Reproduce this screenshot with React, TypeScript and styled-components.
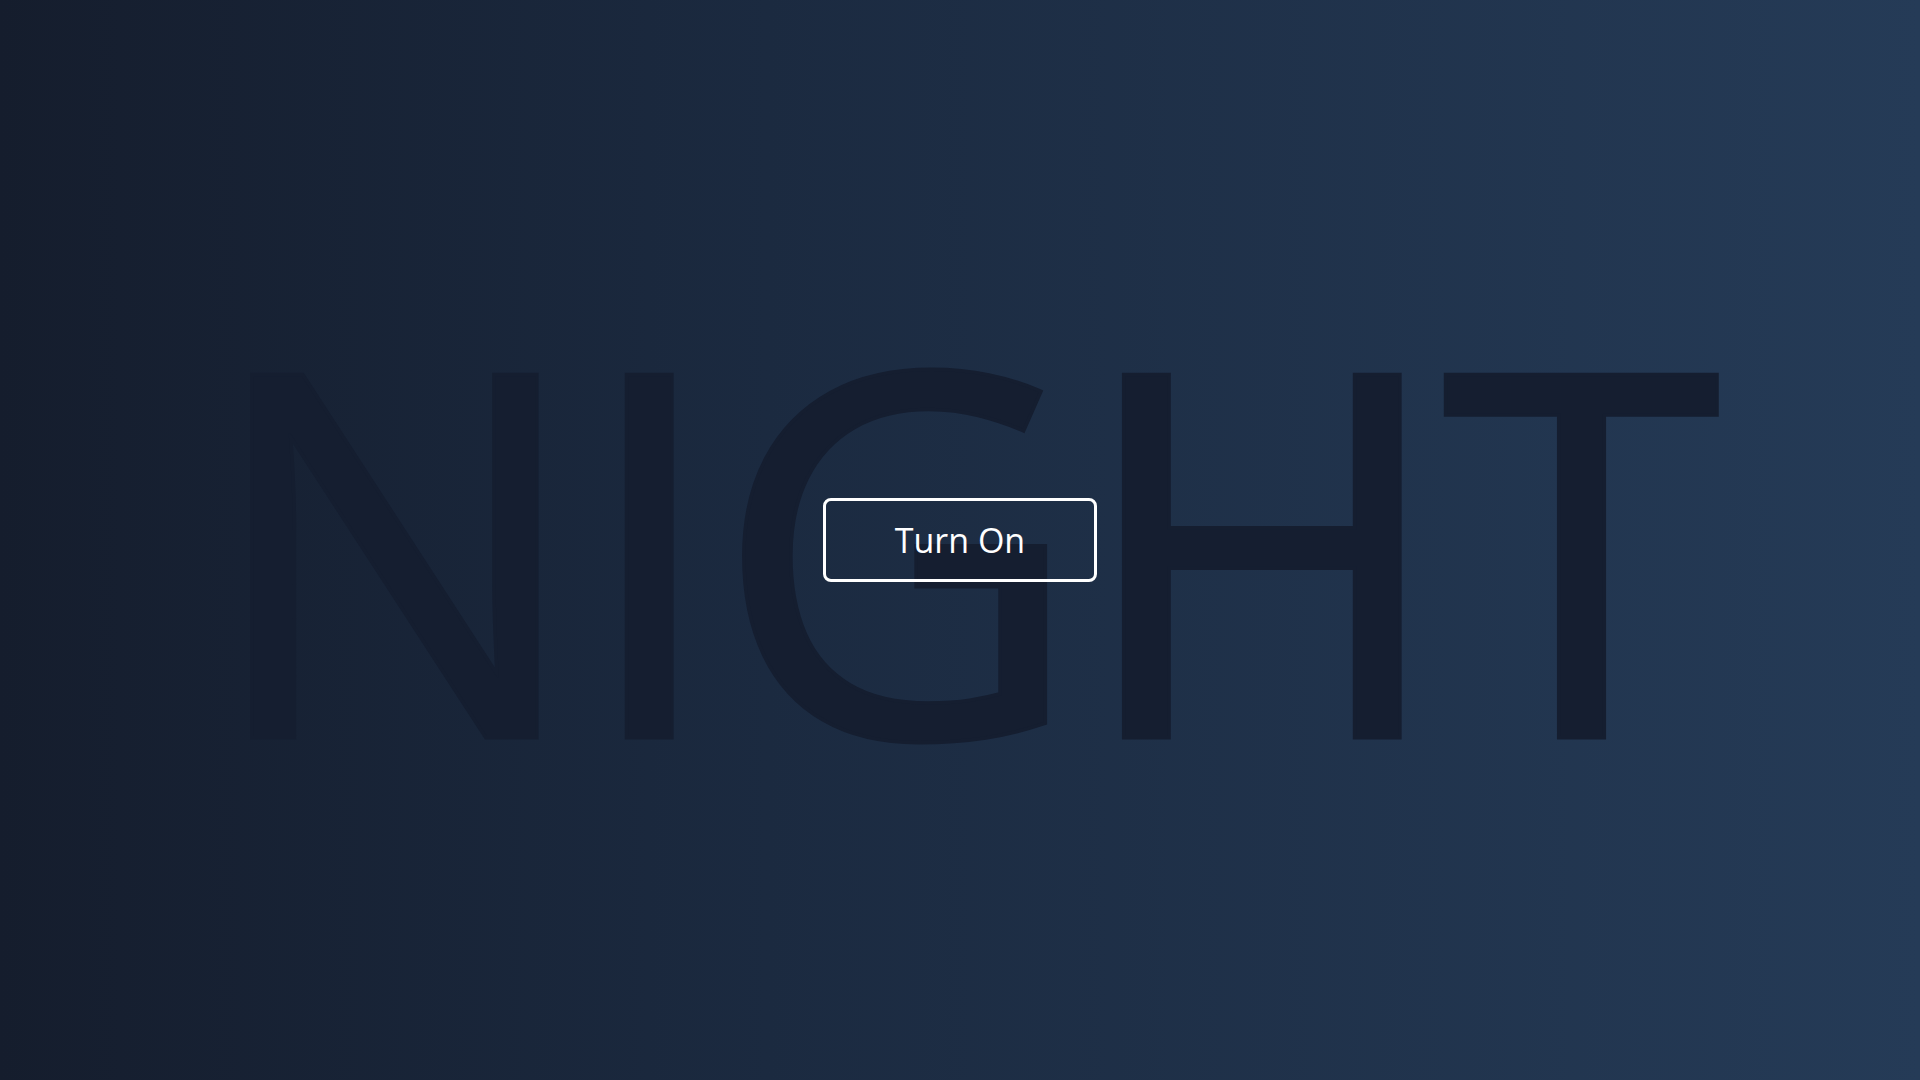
import React from "react";
import styled, { createGlobalStyle } from "styled-components";

const Global = createGlobalStyle`
  html, body, #root { margin: 0; padding: 0; height: 100%; }
  body { font-family: "Open Sans", sans-serif; }
`;

const Stage = styled.main`
  position: relative;
  width: 100vw;
  height: 100vh;
  overflow: hidden;
  display: grid;
  place-items: center;
  background: linear-gradient(to right, #151d2d 0%, #1b2a40 40%, #253b57 100%);
`;

const Word = styled.div`
  grid-area: 1 / 1;
  font-family: "Open Sans", sans-serif;
  font-size: 504px;
  line-height: normal;
  letter-spacing: -5px;
  color: #151e30;
  -webkit-text-stroke: 7px #151e30;
  paint-order: stroke fill;
  user-select: none;
  white-space: nowrap;
`;

const Button = styled.button`
  grid-area: 1 / 1;
  z-index: 1;
  font-family: "Open Sans", sans-serif;
  font-size: 34px;
  line-height: normal;
  color: #ffffff;
  background: transparent;
  border: 3px solid #ffffff;
  border-radius: 8px;
  padding: 16px 69px;
  cursor: pointer;
`;

export default function App() {
  return (
    <>
      <Global />
      <Stage>
        <Word>NIGHT</Word>
        <Button>Turn On</Button>
      </Stage>
    </>
  );
}
